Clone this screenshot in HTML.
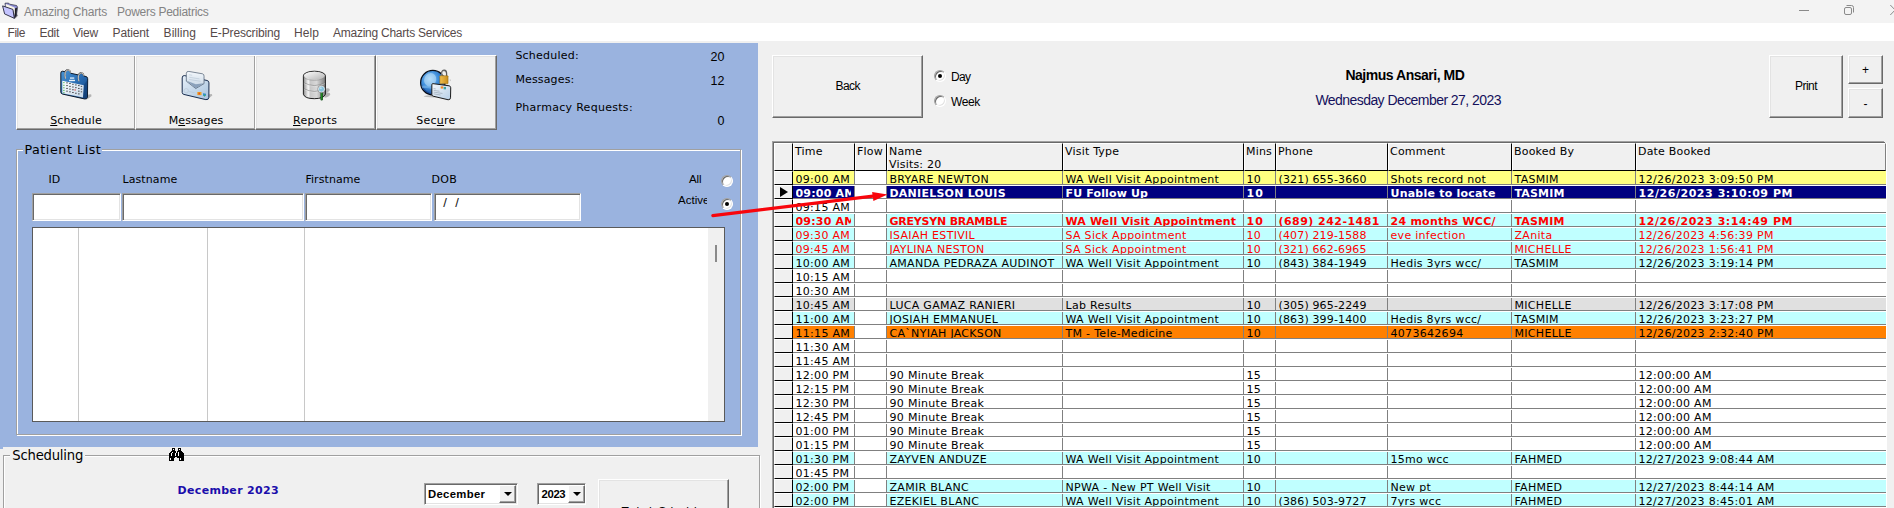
<!DOCTYPE html>
<html lang="en"><head><meta charset="utf-8"><title>Amazing Charts Powers Pediatrics</title>
<style>
html,body{margin:0;padding:0}
body{width:1894px;height:508px;overflow:hidden;position:relative;background:#f0f0f0;font-family:"DejaVu Sans","Liberation Sans",sans-serif;font-size:11px;letter-spacing:.3px;color:#000}
div,span,i,svg{position:absolute;box-sizing:border-box}
.t{white-space:nowrap;line-height:1;letter-spacing:0}
.dv{font-family:"DejaVu Sans","Liberation Sans",sans-serif}
.ls{font-family:"Liberation Sans","DejaVu Sans",sans-serif}
u{text-decoration:underline;text-underline-offset:1px}
#title{left:0;top:0;width:1894px;height:23px;background:#f3f3f3}
#menu{left:0;top:23px;width:1894px;height:18px;background:#fff}
#left{left:0;top:43px;width:758px;height:406px;background:#9ab3df}
#sched{left:3px;top:447px;width:757px;height:61px;background:#f0f0f0}
.btn{background:#f0f0f0;border:1px solid;border-color:#fff #696969 #696969 #fff;box-shadow:inset -1px -1px 0 #a0a0a0,inset 1px 1px 0 #e3e3e3}
.sunk{background:#fff;border:1px solid;border-color:#a0a0a0 #fff #fff #a0a0a0;box-shadow:inset 1px 1px 0 #696969,inset -1px -1px 0 #e3e3e3}
.grp{border:1px solid #a0a0a0;box-shadow:1px 1px 0 #fff,inset 1px 1px 0 #fff}
.radio{width:12px;height:12px;border-radius:50%;background:#fff;border:1px solid;border-color:#a0a0a0 #fff #fff #a0a0a0;box-shadow:inset 1px 1px 0 #696969,inset -1px -1px 0 #e3e3e3}
.radio.on:after{content:"";position:absolute;left:3px;top:3px;width:4px;height:4px;border-radius:50%;background:#000}
.vl{width:1px;background:#c8c8c8}
.combo{background:#fff;border:1px solid;border-color:#a0a0a0 #fff #fff #a0a0a0;box-shadow:inset 1px 1px 0 #696969,inset -1px -1px 0 #e3e3e3}
.dd{background:#f0f0f0;border:1px solid;border-color:#fff #696969 #696969 #fff;box-shadow:inset -1px -1px 0 #a0a0a0}
.dd:after{content:"";position:absolute;left:50%;top:50%;margin:-2px 0 0 -4px;border:4px solid transparent;border-top:4px solid #000;border-bottom:0}
/* grid */
#grid{left:774px;top:143px;width:1112px;height:372px;background:#fff;box-shadow:-1px -1px 0 0 #696969,-2px -2px 0 0 #a0a0a0,1px 0 0 0 #fff}
.hc{top:0;height:28px;background:#f0f0f0;border:1px solid;border-color:#fff #000 #000 #fff;overflow:hidden}
.hc.last{border-right-color:#808080}
.hc span{left:1px;top:0.5px;line-height:13px;white-space:nowrap;letter-spacing:.2px}
.row{left:0;width:1112px;height:14px}
.rh{left:0;top:0;width:19px;height:14px;background:#f0f0f0;border:1px solid;border-color:#fff #000 #000 #fff}
.c{top:0;height:14px;border-top:1px solid #fff;border-bottom:1px solid #808080;box-shadow:inset -1px 0 0 #808080;padding-left:2.5px;line-height:16px;overflow:hidden;white-space:nowrap}
.c.last{box-shadow:none}
.tc{left:2.5px;top:0;width:55px;height:12px;overflow:hidden;line-height:16px}
.c.first{border-top:0;padding-top:1px}
.c.first .tc{top:1px}
.wb,.rb{font-weight:bold;letter-spacing:.2px}
.wb{color:#fff}
.r,.rb{color:#ff0000}
.tri{left:5px;top:0.5px;width:0;height:0;border:5.5px solid transparent;border-left:8px solid #000;border-right:0}
#arrow{left:0;top:0;pointer-events:none}

</style></head>
<body>
<div id="title"></div><div id="menu"></div><div id="left"></div><div id="sched"></div>
<div style="left:0px;top:447px;width:3px;height:1px;background:#9ab3df"></div>
<svg style="left:0;top:0" width="24" height="24" viewBox="0 0 24 24">
<path d="M16.4 13.6 L18.2 15.6 L15 18.8 Z" fill="#9a9a9a"/>
<path d="M5 3.2 L8.6 3.1 L9.6 4.2 L16.6 5.5 L17.6 7.2 L16.4 15.8 L14.4 18.4 L13 9.6 L5.4 6.8 Z" fill="#8e8ed6" stroke="#2c2c3c" stroke-width=".7"/>
<path d="M5.9 3.9 L14.6 7.4 L15.3 16.6 L13 9.8 L5.8 7 Z" fill="#f6f4e8"/>
<path d="M2.6 5.9 L12.9 9.4 L14.3 18.3 L4.6 13.9 Z" fill="#c4c4ff" stroke="#26263a" stroke-width=".9" stroke-linejoin="round"/>
<path d="M15 8.6 L17 7.4 L16.3 15.8 L14.6 18.2 Z" fill="#1e1e1e"/>
</svg>
<svg style="left:1774px;top:0" width="120" height="23" viewBox="0 0 120 23" fill="none" stroke="#8a8a8a" stroke-width="1">
<path d="M25 10.5 H35"/>
<rect x="70.5" y="7.5" width="7" height="7" rx="1.5"/>
<path d="M72.5 5.5 H77.5 Q79.5 5.5 79.5 7.5 V12.5"/>
<path d="M116.3 5 L126 15 M116.3 15 L126 5"/>
</svg>
<div class="btn" style="left:16px;top:55px;width:120px;height:75px;"></div>
<div class="btn" style="left:135px;top:55px;width:121px;height:75px;"></div>
<div class="btn" style="left:255px;top:55px;width:121px;height:75px;"></div>
<div class="btn" style="left:376px;top:55px;width:121px;height:75px;"></div>
<svg style="left:50px;top:60px" width="60" height="50" viewBox="0 0 610 508"><defs><linearGradient id="cg" x1="0" y1="0" x2="1" y2="1"><stop offset="0" stop-color="#4a96d6"/><stop offset=".5" stop-color="#2a6db3"/><stop offset="1" stop-color="#134482"/></linearGradient>
<linearGradient id="cp" x1="0" y1="0" x2="1" y2="1"><stop offset="0" stop-color="#fdfeff"/><stop offset="1" stop-color="#c4d6e8"/></linearGradient></defs>
<path d="M378 352 L418 348 L422 368 L382 396 Z" fill="#9a9a9a" opacity=".7"/>
<path d="M128 114 Q110 113 110 133 L110 325 Q110 341 126 346 L352 396 Q380 400 381 378 L383 190 Q383 172 366 168 L345 163 Q335 128 312 128 Q292 132 290 152 L212 135 Q205 100 180 98 Q158 100 152 119 Z" fill="url(#cg)" stroke="#0b1626" stroke-width="10" stroke-linejoin="round"/>
<path d="M343 256 L381 200 L379 380 L352 394 L335 378 Z" fill="#103a70" opacity=".55"/>
<path d="M125 212 L343 256 L335 380 L125 339 Z" fill="url(#cp)"/>
<g fill="#3a3a3a">
<rect x="165" y="228" width="16" height="9"/><rect x="195" y="235" width="16" height="9"/><rect x="225" y="242" width="16" height="9"/><rect x="255" y="249" width="16" height="9"/><rect x="285" y="256" width="16" height="9"/><rect x="313" y="263" width="14" height="9"/>
<rect x="165" y="256" width="16" height="9"/><rect x="195" y="263" width="16" height="9"/><rect x="225" y="270" width="16" height="9"/><rect x="255" y="277" width="16" height="9"/><rect x="285" y="284" width="16" height="9"/><rect x="313" y="291" width="14" height="9"/>
<rect x="165" y="284" width="16" height="9"/><rect x="195" y="291" width="16" height="9"/><rect x="225" y="298" width="16" height="9"/><rect x="285" y="312" width="16" height="9"/><rect x="313" y="319" width="14" height="9"/>
<rect x="165" y="312" width="16" height="9"/><rect x="195" y="319" width="16" height="9"/><rect x="225" y="326" width="16" height="9"/><rect x="255" y="333" width="16" height="9"/><rect x="285" y="340" width="16" height="9"/>
</g>
<rect x="248" y="300" width="16" height="9" fill="#e03030"/>
<g fill="#3cb043"><rect x="134" y="226" width="14" height="9"/><rect x="134" y="252" width="14" height="9"/><rect x="134" y="278" width="14" height="9"/><rect x="134" y="304" width="14" height="9"/><rect x="134" y="328" width="14" height="9"/></g>
<g fill="#e8f2fb"><rect x="203" y="177" width="44" height="13"/><rect x="194" y="201" width="60" height="14"/></g>
<path d="M157 186 Q140 112 182 100 Q205 102 208 124" fill="none" stroke="#5f5a54" stroke-width="13" stroke-linecap="round"/>
<path d="M157 186 Q140 112 182 100 Q205 102 208 124" fill="none" stroke="#e9e6e0" stroke-width="8" stroke-linecap="round"/>
<path d="M293 212 Q274 146 316 130 Q340 132 342 154" fill="none" stroke="#5f5a54" stroke-width="13" stroke-linecap="round"/>
<path d="M293 212 Q274 146 316 130 Q340 132 342 154" fill="none" stroke="#e9e6e0" stroke-width="8" stroke-linecap="round"/>
</svg>
<svg style="left:170px;top:60px" width="60" height="50" viewBox="0 0 610 508"><defs><linearGradient id="mg" x1="0" y1="0" x2="1" y2="1"><stop offset="0" stop-color="#e6eff8"/><stop offset="1" stop-color="#a9c4de"/></linearGradient>
<linearGradient id="mp" x1="0" y1="0" x2="0" y2="1"><stop offset="0" stop-color="#f4f8fc"/><stop offset="1" stop-color="#c3d3e3"/></linearGradient></defs>
<path d="M385 350 L425 345 L430 362 L388 395 Z" fill="#9a9a9a" opacity=".7"/>
<path d="M145 158 Q124 158 124 182 L124 330 Q124 346 142 350 L365 403 Q394 406 395 380 L396 232 Q396 212 376 208 Z" fill="url(#mg)" stroke="#13284a" stroke-width="10" stroke-linejoin="round"/>
<path d="M166 215 L166 135 Q168 112 192 116 L330 140 Q348 146 346 165 L346 240 L262 290 Z" fill="url(#mp)" stroke="#46566b" stroke-width="7" stroke-linejoin="round"/>
<path d="M170 212 L262 288 L344 236 L262 246 Z" fill="#7f97b3" opacity=".85"/>
<g stroke="#b4c3d3" stroke-width="6"><path d="M195 150 L225 155"/><path d="M195 175 L300 192"/><path d="M195 198 L310 216"/></g>
<circle cx="165" cy="312" r="22" fill="none" stroke="#b9c6d3" stroke-width="6"/>
<path d="M190 320 L250 332" stroke="#b9c6d3" stroke-width="6"/>
<rect x="278" y="325" width="42" height="32" fill="#f0a020"/><rect x="290" y="332" width="14" height="18" fill="#e04a20"/>
<path d="M335 337 L366 343 L364 362 L350 374 L337 360 Z" fill="#2f8fc8"/><path d="M343 352 L360 356 L350 370 Z" fill="#4cb848"/>
</svg>
<svg style="left:290px;top:60px" width="60" height="50" viewBox="0 0 610 508"><defs><linearGradient id="rg" x1="0" y1="0" x2="1" y2="0"><stop offset="0" stop-color="#8c8c8c"/><stop offset=".22" stop-color="#f6f6f6"/><stop offset=".32" stop-color="#c8c8c8"/><stop offset=".6" stop-color="#d8d8d8"/><stop offset="1" stop-color="#7e7e7e"/></linearGradient>
<linearGradient id="rt" x1="0" y1="0" x2="1" y2="1"><stop offset="0" stop-color="#fcfcfc"/><stop offset="1" stop-color="#b4b4b4"/></linearGradient></defs>
<path d="M352 292 Q398 278 404 300 Q404 322 372 330 Q410 326 410 348 Q400 378 352 384 Z" fill="#a4a4a4" opacity=".8"/>
<path d="M136 160 A112 46 0 0 1 360 160 L360 348 Q345 393 247 393 Q150 393 136 348 Z" fill="url(#rg)" stroke="#1e1e1e" stroke-width="10" stroke-linejoin="round"/>
<g fill="none" stroke="#777" stroke-width="6"><path d="M141 232 Q247 288 355 232"/><path d="M141 292 Q247 348 355 292"/></g>
<g fill="none" stroke="#fff" stroke-width="4" opacity=".8"><path d="M141 239 Q247 295 355 239"/><path d="M141 299 Q247 355 355 299"/></g>
<ellipse cx="248" cy="160" rx="107" ry="40" fill="url(#rt)"/>
<path d="M140 165 A108 42 0 0 0 356 165" fill="none" stroke="#8a8a8a" stroke-width="5"/>
<path d="M322 332 L322 400" stroke="#0a4a10" stroke-width="24" stroke-linecap="round"/>
<path d="M322 337 L322 398" stroke="#239423" stroke-width="11" stroke-linecap="round"/>
<circle cx="320" cy="296" r="32" fill="#86c2dc" stroke="#f6f6f6" stroke-width="9"/>
<circle cx="320" cy="296" r="38" fill="none" stroke="#5e5e5e" stroke-width="4"/>
<ellipse cx="312" cy="286" rx="12" ry="9" fill="#c6e6f2" opacity=".8"/>
</svg>
<svg style="left:410px;top:60px" width="60" height="50" viewBox="0 0 610 508"><defs><radialGradient id="sg" cx=".38" cy=".35" r=".75"><stop offset="0" stop-color="#a9d6f7"/><stop offset=".45" stop-color="#3f8fdc"/><stop offset="1" stop-color="#123f8a"/></radialGradient>
<linearGradient id="sl" x1="0" y1="0" x2="1" y2="0"><stop offset="0" stop-color="#f0c050"/><stop offset="1" stop-color="#c98e1c"/></linearGradient>
<linearGradient id="se" x1="0" y1="0" x2="1" y2="1"><stop offset="0" stop-color="#f4f8fc"/><stop offset="1" stop-color="#b5cee6"/></linearGradient></defs>
<ellipse cx="240" cy="368" rx="100" ry="12" fill="#9a9a9a" opacity=".6"/>
<circle cx="232" cy="230" r="124" fill="url(#sg)" stroke="#070b14" stroke-width="12"/>
<path d="M122 250 Q150 330 240 345 Q170 350 128 290 Z" fill="#0f3a86" opacity=".7"/>
<ellipse cx="205" cy="200" rx="60" ry="70" fill="#bfe2fa" opacity=".55" transform="rotate(25 205 200)"/>
<path d="M118 262 Q200 250 300 300 L300 322 Q200 275 122 288 Z" fill="#8cc4f2" opacity=".5"/>
<path d="M322 165 L322 135 Q324 104 348 104 Q372 106 372 136 L372 165" fill="none" stroke="#5a5a5a" stroke-width="13"/>
<path d="M326 165 L326 137 Q328 112 348 112" fill="none" stroke="#e8e8e8" stroke-width="5"/>
<rect x="303" y="160" width="84" height="82" rx="6" fill="url(#sl)" stroke="#8a6410" stroke-width="5"/>
<path d="M400 200 L415 198 L412 215 Z" fill="#9a9a9a" opacity=".6"/>
<path d="M232 240 L398 262 Q414 266 414 282 L412 384 Q410 406 388 404 L236 368 Q222 364 222 350 L222 252 Q222 240 232 240 Z" fill="url(#se)" stroke="#151515" stroke-width="10" stroke-linejoin="round"/>
<g stroke="#7f8b99" stroke-width="5"><path d="M240 290 L262 294"/><path d="M240 308 L300 318"/><path d="M240 326 L330 340"/><path d="M240 344 L310 356"/></g>
<rect x="312" y="268" width="26" height="22" fill="#f08a24"/><rect x="342" y="274" width="24" height="24" fill="#3aa5a0"/>
</svg>
<div class="grp" style="left:16px;top:149px;width:725px;height:286px;"></div>
<div style="left:23px;top:142px;width:79px;height:14px;background:#9ab3df"></div>
<div class="radio" style="left:721px;top:175.2px;width:12px;height:12px;"></div>
<div class="radio on" style="left:721px;top:198.2px;width:12px;height:12px;"></div>
<div class="sunk" style="left:32px;top:193px;width:89px;height:28px;"></div>
<div class="sunk" style="left:122px;top:193px;width:182px;height:28px;"></div>
<div class="sunk" style="left:305px;top:193px;width:127px;height:28px;"></div>
<div class="sunk" style="left:434px;top:193px;width:147px;height:28px;"></div>
<div style="left:32px;top:227px;width:693px;height:195px;background:#fff;border:1px solid #5a5a5a"></div>
<div class="vl" style="left:78px;top:228px;width:1px;height:193px;"></div>
<div class="vl" style="left:207px;top:228px;width:1px;height:193px;"></div>
<div class="vl" style="left:304px;top:228px;width:1px;height:193px;"></div>
<div style="left:708px;top:228px;width:16px;height:193px;background:#f0f0f0"></div>
<div style="left:715px;top:245px;width:2px;height:17px;background:#8a8a8a"></div>
<div class="grp" style="left:3px;top:455px;width:757px;height:80px;"></div>
<div style="left:10px;top:448px;width:75px;height:14px;background:#f0f0f0"></div>
<div style="left:169px;top:448px;width:15px;height:13px;background:#f0f0f0"></div>
<svg style="left:169px;top:448px" width="15" height="13" viewBox="0 0 15 13" shape-rendering="crispEdges"><rect x="3" y="0" width="3" height="1" fill="#000"/><rect x="9" y="0" width="3" height="1" fill="#000"/><rect x="3" y="1" width="1" height="1" fill="#000"/><rect x="4" y="1" width="1" height="1" fill="#fff"/><rect x="5" y="1" width="1" height="1" fill="#000"/><rect x="9" y="1" width="1" height="1" fill="#000"/><rect x="10" y="1" width="1" height="1" fill="#fff"/><rect x="11" y="1" width="1" height="1" fill="#000"/><rect x="3" y="2" width="3" height="1" fill="#000"/><rect x="9" y="2" width="3" height="1" fill="#000"/><rect x="2" y="3" width="5" height="1" fill="#000"/><rect x="8" y="3" width="5" height="1" fill="#000"/><rect x="1" y="4" width="2" height="1" fill="#000"/><rect x="3" y="4" width="1" height="1" fill="#fff"/><rect x="4" y="4" width="3" height="1" fill="#000"/><rect x="8" y="4" width="1" height="1" fill="#000"/><rect x="9" y="4" width="1" height="1" fill="#fff"/><rect x="10" y="4" width="4" height="1" fill="#000"/><rect x="0" y="5" width="2" height="1" fill="#000"/><rect x="2" y="5" width="1" height="1" fill="#fff"/><rect x="3" y="5" width="3" height="1" fill="#000"/><rect x="6" y="5" width="1" height="1" fill="#fff"/><rect x="7" y="5" width="2" height="1" fill="#000"/><rect x="9" y="5" width="1" height="1" fill="#fff"/><rect x="10" y="5" width="5" height="1" fill="#000"/><rect x="0" y="6" width="2" height="1" fill="#000"/><rect x="2" y="6" width="1" height="1" fill="#fff"/><rect x="3" y="6" width="3" height="1" fill="#000"/><rect x="6" y="6" width="1" height="1" fill="#fff"/><rect x="7" y="6" width="2" height="1" fill="#000"/><rect x="9" y="6" width="1" height="1" fill="#fff"/><rect x="10" y="6" width="5" height="1" fill="#000"/><rect x="0" y="7" width="2" height="1" fill="#000"/><rect x="2" y="7" width="1" height="1" fill="#fff"/><rect x="3" y="7" width="3" height="1" fill="#000"/><rect x="6" y="7" width="1" height="1" fill="#fff"/><rect x="7" y="7" width="2" height="1" fill="#000"/><rect x="9" y="7" width="1" height="1" fill="#fff"/><rect x="10" y="7" width="5" height="1" fill="#000"/><rect x="0" y="8" width="15" height="1" fill="#000"/><rect x="0" y="9" width="6" height="1" fill="#000"/><rect x="8" y="9" width="7" height="1" fill="#000"/><rect x="0" y="10" width="1" height="1" fill="#000"/><rect x="1" y="10" width="1" height="1" fill="#fff"/><rect x="2" y="10" width="3" height="1" fill="#000"/><rect x="10" y="10" width="1" height="1" fill="#000"/><rect x="11" y="10" width="1" height="1" fill="#fff"/><rect x="12" y="10" width="3" height="1" fill="#000"/><rect x="0" y="11" width="1" height="1" fill="#000"/><rect x="1" y="11" width="1" height="1" fill="#fff"/><rect x="2" y="11" width="3" height="1" fill="#000"/><rect x="10" y="11" width="1" height="1" fill="#000"/><rect x="11" y="11" width="1" height="1" fill="#fff"/><rect x="12" y="11" width="3" height="1" fill="#000"/><rect x="0" y="12" width="5" height="1" fill="#000"/><rect x="10" y="12" width="5" height="1" fill="#000"/></svg>
<div class="combo" style="left:424px;top:483px;width:94px;height:22px;"></div>
<div class="dd" style="left:499px;top:485px;width:17px;height:18px;"></div>
<div class="combo" style="left:537px;top:483px;width:49px;height:22px;"></div>
<div class="dd" style="left:568px;top:485px;width:17px;height:18px;"></div>
<div class="btn" style="left:598px;top:479px;width:131px;height:41px;"></div>
<div class="btn" style="left:772px;top:55px;width:151px;height:63px;"></div>
<div class="radio on" style="left:934px;top:70px;width:12px;height:12px;"></div>
<div class="radio" style="left:934px;top:94.5px;width:12px;height:12px;"></div>
<div class="btn" style="left:1769px;top:55px;width:74px;height:63px;"></div>
<div class="btn" style="left:1848px;top:55px;width:35px;height:29px;"></div>
<div class="btn" style="left:1848px;top:88px;width:35px;height:30px;"></div>
<span class="t ls" style="top:6.00px;font-size:12px;letter-spacing:-0.170px;left:24px;color:#838383;">Amazing Charts</span>
<span class="t ls" style="top:6.00px;font-size:12px;letter-spacing:-0.267px;left:117px;color:#838383;">Powers Pediatrics</span>
<span class="t ls" style="top:27.00px;font-size:12px;letter-spacing:-0.486px;left:7.6px;color:#564a4a;">File</span>
<span class="t ls" style="top:27.00px;font-size:12px;letter-spacing:-0.297px;left:39.5px;color:#564a4a;">Edit</span>
<span class="t ls" style="top:27.00px;font-size:12px;letter-spacing:-0.199px;left:73px;color:#564a4a;">View</span>
<span class="t ls" style="top:27.00px;font-size:12px;letter-spacing:-0.123px;left:112.5px;color:#564a4a;">Patient</span>
<span class="t ls" style="top:27.00px;font-size:12px;letter-spacing:0.055px;left:163.6px;color:#564a4a;">Billing</span>
<span class="t ls" style="top:27.00px;font-size:12px;letter-spacing:-0.156px;left:210px;color:#564a4a;">E-Prescribing</span>
<span class="t ls" style="top:27.00px;font-size:12px;letter-spacing:0.078px;left:294px;color:#564a4a;">Help</span>
<span class="t ls" style="top:27.00px;font-size:12px;letter-spacing:-0.249px;left:333px;color:#564a4a;">Amazing Charts Services</span>
<span class="t dv" style="top:115.00px;font-size:11px;letter-spacing:0.130px;left:50.2px;"><u>S</u>chedule</span>
<span class="t dv" style="top:115.00px;font-size:11px;letter-spacing:0.081px;left:168.7px;">M<u>e</u>ssages</span>
<span class="t dv" style="top:115.00px;font-size:11px;letter-spacing:0.300px;left:293px;"><u>R</u>eports</span>
<span class="t dv" style="top:115.00px;font-size:11px;letter-spacing:0.245px;left:416.3px;">Sec<u>u</u>re</span>
<span class="t dv" style="top:50.00px;font-size:11px;letter-spacing:0.225px;left:515.4px;">Scheduled:</span>
<span class="t dv" style="top:74.00px;font-size:11px;letter-spacing:0.149px;left:515.4px;">Messages:</span>
<span class="t dv" style="top:102.00px;font-size:11px;letter-spacing:0.288px;left:515.4px;">Pharmacy Requests:</span>
<span class="t ls" style="top:51.00px;font-size:12.5px;left:710.59px;">20</span>
<span class="t ls" style="top:75.00px;font-size:12.5px;left:710.59px;">12</span>
<span class="t ls" style="top:115.00px;font-size:12.5px;left:717.55px;">0</span>
<span class="t dv" style="top:144.00px;font-size:12.7px;letter-spacing:0.551px;left:24.4px;">Patient List</span>
<span class="t dv" style="top:174.00px;font-size:11px;left:48.6px;">ID</span>
<span class="t dv" style="top:174.00px;font-size:11px;letter-spacing:0.111px;left:122.4px;">Lastname</span>
<span class="t dv" style="top:174.00px;font-size:11px;letter-spacing:0.071px;left:305.4px;">Firstname</span>
<span class="t dv" style="top:174.00px;font-size:11px;letter-spacing:0.271px;left:431.5px;">DOB</span>
<span class="t ls" style="top:174.00px;font-size:11.5px;letter-spacing:-0.094px;left:689px;">All</span>
<span class="t ls" style="top:195.00px;font-size:11.5px;letter-spacing:0.029px;left:678px;width:29.3px;overflow:hidden;">Active</span>
<span class="t ls" style="top:196.00px;font-size:13px;letter-spacing:2.385px;left:443.3px;color:#111;">/ /</span>
<span class="t dv" style="top:449.00px;font-size:13.2px;letter-spacing:-0.209px;left:12.3px;">Scheduling</span>
<span class="t dv" style="top:485.00px;font-size:11px;letter-spacing:0.312px;left:177.6px;color:#1a0dab;font-weight:bold;">December 2023</span>
<span class="t ls" style="top:489.00px;font-size:11.3px;letter-spacing:0.332px;left:428px;font-weight:bold;">December</span>
<span class="t ls" style="top:489.00px;font-size:11.3px;letter-spacing:-0.335px;left:541.5px;font-weight:bold;">2023</span>
<span class="t ls" style="top:506.00px;font-size:12px;letter-spacing:-0.855px;left:621.5px;">Today's Schedule</span>
<span class="t ls" style="top:80.00px;font-size:12px;letter-spacing:-0.597px;left:835.5px;">Back</span>
<span class="t ls" style="top:71.00px;font-size:12px;letter-spacing:-0.681px;left:951px;">Day</span>
<span class="t ls" style="top:96.00px;font-size:12px;letter-spacing:-0.367px;left:951px;">Week</span>
<span class="t ls" style="top:68.00px;font-size:14px;letter-spacing:-0.475px;left:1345.4px;font-weight:bold;">Najmus Ansari, MD</span>
<span class="t ls" style="top:93.00px;font-size:14px;letter-spacing:-0.557px;left:1315.4px;color:#15105c;">Wednesday December 27, 2023</span>
<span class="t ls" style="top:80.00px;font-size:12px;letter-spacing:-0.537px;left:1795.00px;">Print</span>
<span class="t ls" style="top:64.00px;font-size:12px;left:1861.99px;">+</span>
<span class="t ls" style="top:98.00px;font-size:12px;left:1863.50px;">-</span>
<div id="grid">
<div class="hc" style="left:0px;width:19px"></div>
<div class="hc" style="left:19px;width:62px"><span>Time</span></div>
<div class="hc" style="left:81px;width:32px"><span>Flow</span></div>
<div class="hc" style="left:113px;width:176px"><span>Name<br>Visits: 20</span></div>
<div class="hc" style="left:289px;width:181px"><span>Visit Type</span></div>
<div class="hc" style="left:470px;width:32px"><span>Mins</span></div>
<div class="hc" style="left:502px;width:112px"><span>Phone</span></div>
<div class="hc" style="left:614px;width:124px"><span>Comment</span></div>
<div class="hc" style="left:738px;width:124px"><span>Booked By</span></div>
<div class="hc last" style="left:862px;width:250px"><span>Date Booked</span></div>
<div class="row k" style="top:28px">
<div class="rh"></div>
<div class="c first" style="left:19px;width:62px;background-color:#ffff80;"><span class="tc">09:00 AM</span></div>
<div class="c first" style="left:81px;width:32px;"></div>
<div class="c first" style="left:113px;width:176px;background-color:#ffff80;">BRYARE NEWTON</div>
<div class="c first" style="left:289px;width:181px;background-color:#ffff80;">WA Well Visit Appointment</div>
<div class="c first" style="left:470px;width:32px;background-color:#ffff80;">10</div>
<div class="c first" style="left:502px;width:112px;background-color:#ffff80;letter-spacing:.15px;">(321) 655-3660</div>
<div class="c first" style="left:614px;width:124px;background-color:#ffff80;">Shots record not</div>
<div class="c first" style="left:738px;width:124px;background-color:#ffff80;">TASMIM</div>
<div class="c last first" style="left:862px;width:250px;background-color:#ffff80;">12/26/2023 3:09:50 PM</div>
</div>
<div class="row wb" style="top:42px">
<div class="rh"><i class="tri"></i></div>
<div class="c" style="left:19px;width:62px;background-color:#000080;"><span class="tc">09:00 AM</span></div>
<div class="c" style="left:81px;width:32px;"></div>
<div class="c" style="left:113px;width:176px;background-color:#000080;letter-spacing:0.24px;">DANIELSON LOUIS</div>
<div class="c" style="left:289px;width:181px;background-color:#000080;letter-spacing:0.15px;">FU Follow Up</div>
<div class="c" style="left:470px;width:32px;background-color:#000080;letter-spacing:1.19px;">10</div>
<div class="c" style="left:502px;width:112px;background-color:#000080;letter-spacing:.15px;"></div>
<div class="c" style="left:614px;width:124px;background-color:#000080;letter-spacing:0.22px;">Unable to locate</div>
<div class="c" style="left:738px;width:124px;background-color:#000080;letter-spacing:0.18px;">TASMIM</div>
<div class="c last" style="left:862px;width:250px;background-color:#000080;letter-spacing:0.55px;">12/26/2023 3:10:09 PM</div>
</div>
<div class="row k" style="top:56px">
<div class="rh"></div>
<div class="c" style="left:19px;width:62px;"><span class="tc">09:15 AM</span></div>
<div class="c" style="left:81px;width:32px;"></div>
<div class="c" style="left:113px;width:176px;"></div>
<div class="c" style="left:289px;width:181px;"></div>
<div class="c" style="left:470px;width:32px;"></div>
<div class="c" style="left:502px;width:112px;letter-spacing:.15px;"></div>
<div class="c" style="left:614px;width:124px;"></div>
<div class="c" style="left:738px;width:124px;"></div>
<div class="c last" style="left:862px;width:250px;"></div>
</div>
<div class="row rb" style="top:70px">
<div class="rh"></div>
<div class="c" style="left:19px;width:62px;background-color:#c0ffff;"><span class="tc">09:30 AM</span></div>
<div class="c" style="left:81px;width:32px;"></div>
<div class="c" style="left:113px;width:176px;background-color:#c0ffff;letter-spacing:-0.22px;">GREYSYN BRAMBLE</div>
<div class="c" style="left:289px;width:181px;background-color:#c0ffff;letter-spacing:0.16px;">WA Well Visit Appointment</div>
<div class="c" style="left:470px;width:32px;background-color:#c0ffff;letter-spacing:1.19px;">10</div>
<div class="c" style="left:502px;width:112px;background-color:#c0ffff;letter-spacing:0.46px;">(689) 242-1481</div>
<div class="c" style="left:614px;width:124px;background-color:#c0ffff;letter-spacing:0.25px;">24 months WCC/</div>
<div class="c" style="left:738px;width:124px;background-color:#c0ffff;letter-spacing:0.18px;">TASMIM</div>
<div class="c last" style="left:862px;width:250px;background-color:#c0ffff;letter-spacing:0.55px;">12/26/2023 3:14:49 PM</div>
</div>
<div class="row r" style="top:84px">
<div class="rh"></div>
<div class="c" style="left:19px;width:62px;background-color:#c0ffff;"><span class="tc">09:30 AM</span></div>
<div class="c" style="left:81px;width:32px;"></div>
<div class="c" style="left:113px;width:176px;background-color:#c0ffff;">ISAIAH ESTIVIL</div>
<div class="c" style="left:289px;width:181px;background-color:#c0ffff;">SA Sick Appointment</div>
<div class="c" style="left:470px;width:32px;background-color:#c0ffff;">10</div>
<div class="c" style="left:502px;width:112px;background-color:#c0ffff;letter-spacing:.15px;">(407) 219-1588</div>
<div class="c" style="left:614px;width:124px;background-color:#c0ffff;">eve infection</div>
<div class="c" style="left:738px;width:124px;background-color:#c0ffff;">ZAnita</div>
<div class="c last" style="left:862px;width:250px;background-color:#c0ffff;">12/26/2023 4:56:39 PM</div>
</div>
<div class="row r" style="top:98px">
<div class="rh"></div>
<div class="c" style="left:19px;width:62px;background-color:#c0ffff;"><span class="tc">09:45 AM</span></div>
<div class="c" style="left:81px;width:32px;"></div>
<div class="c" style="left:113px;width:176px;background-color:#c0ffff;">JAYLINA NESTON</div>
<div class="c" style="left:289px;width:181px;background-color:#c0ffff;">SA Sick Appointment</div>
<div class="c" style="left:470px;width:32px;background-color:#c0ffff;">10</div>
<div class="c" style="left:502px;width:112px;background-color:#c0ffff;letter-spacing:.15px;">(321) 662-6965</div>
<div class="c" style="left:614px;width:124px;background-color:#c0ffff;"></div>
<div class="c" style="left:738px;width:124px;background-color:#c0ffff;">MICHELLE</div>
<div class="c last" style="left:862px;width:250px;background-color:#c0ffff;">12/26/2023 1:56:41 PM</div>
</div>
<div class="row k" style="top:112px">
<div class="rh"></div>
<div class="c" style="left:19px;width:62px;background-color:#c0ffff;"><span class="tc">10:00 AM</span></div>
<div class="c" style="left:81px;width:32px;"></div>
<div class="c" style="left:113px;width:176px;background-color:#c0ffff;">AMANDA PEDRAZA AUDINOT</div>
<div class="c" style="left:289px;width:181px;background-color:#c0ffff;">WA Well Visit Appointment</div>
<div class="c" style="left:470px;width:32px;background-color:#c0ffff;">10</div>
<div class="c" style="left:502px;width:112px;background-color:#c0ffff;letter-spacing:.15px;">(843) 384-1949</div>
<div class="c" style="left:614px;width:124px;background-color:#c0ffff;">Hedis 3yrs wcc/</div>
<div class="c" style="left:738px;width:124px;background-color:#c0ffff;">TASMIM</div>
<div class="c last" style="left:862px;width:250px;background-color:#c0ffff;">12/26/2023 3:19:14 PM</div>
</div>
<div class="row k" style="top:126px">
<div class="rh"></div>
<div class="c" style="left:19px;width:62px;"><span class="tc">10:15 AM</span></div>
<div class="c" style="left:81px;width:32px;"></div>
<div class="c" style="left:113px;width:176px;"></div>
<div class="c" style="left:289px;width:181px;"></div>
<div class="c" style="left:470px;width:32px;"></div>
<div class="c" style="left:502px;width:112px;letter-spacing:.15px;"></div>
<div class="c" style="left:614px;width:124px;"></div>
<div class="c" style="left:738px;width:124px;"></div>
<div class="c last" style="left:862px;width:250px;"></div>
</div>
<div class="row k" style="top:140px">
<div class="rh"></div>
<div class="c" style="left:19px;width:62px;"><span class="tc">10:30 AM</span></div>
<div class="c" style="left:81px;width:32px;"></div>
<div class="c" style="left:113px;width:176px;"></div>
<div class="c" style="left:289px;width:181px;"></div>
<div class="c" style="left:470px;width:32px;"></div>
<div class="c" style="left:502px;width:112px;letter-spacing:.15px;"></div>
<div class="c" style="left:614px;width:124px;"></div>
<div class="c" style="left:738px;width:124px;"></div>
<div class="c last" style="left:862px;width:250px;"></div>
</div>
<div class="row k" style="top:154px">
<div class="rh"></div>
<div class="c" style="left:19px;width:62px;background-color:#e0e0e0;"><span class="tc">10:45 AM</span></div>
<div class="c" style="left:81px;width:32px;"></div>
<div class="c" style="left:113px;width:176px;background-color:#e0e0e0;">LUCA GAMAZ RANIERI</div>
<div class="c" style="left:289px;width:181px;background-color:#e0e0e0;">Lab Results</div>
<div class="c" style="left:470px;width:32px;background-color:#e0e0e0;">10</div>
<div class="c" style="left:502px;width:112px;background-color:#e0e0e0;letter-spacing:.15px;">(305) 965-2249</div>
<div class="c" style="left:614px;width:124px;background-color:#e0e0e0;"></div>
<div class="c" style="left:738px;width:124px;background-color:#e0e0e0;">MICHELLE</div>
<div class="c last" style="left:862px;width:250px;background-color:#e0e0e0;">12/26/2023 3:17:08 PM</div>
</div>
<div class="row k" style="top:168px">
<div class="rh"></div>
<div class="c" style="left:19px;width:62px;background-color:#c0ffff;"><span class="tc">11:00 AM</span></div>
<div class="c" style="left:81px;width:32px;"></div>
<div class="c" style="left:113px;width:176px;background-color:#c0ffff;">JOSIAH EMMANUEL</div>
<div class="c" style="left:289px;width:181px;background-color:#c0ffff;">WA Well Visit Appointment</div>
<div class="c" style="left:470px;width:32px;background-color:#c0ffff;">10</div>
<div class="c" style="left:502px;width:112px;background-color:#c0ffff;letter-spacing:.15px;">(863) 399-1400</div>
<div class="c" style="left:614px;width:124px;background-color:#c0ffff;">Hedis 8yrs wcc/</div>
<div class="c" style="left:738px;width:124px;background-color:#c0ffff;">TASMIM</div>
<div class="c last" style="left:862px;width:250px;background-color:#c0ffff;">12/26/2023 3:23:27 PM</div>
</div>
<div class="row k" style="top:182px">
<div class="rh"></div>
<div class="c" style="left:19px;width:62px;background-color:#ff8000;"><span class="tc">11:15 AM</span></div>
<div class="c" style="left:81px;width:32px;"></div>
<div class="c" style="left:113px;width:176px;background-color:#ff8000;">CA`NYIAH JACKSON</div>
<div class="c" style="left:289px;width:181px;background-color:#ff8000;">TM - Tele-Medicine</div>
<div class="c" style="left:470px;width:32px;background-color:#ff8000;">10</div>
<div class="c" style="left:502px;width:112px;background-color:#ff8000;letter-spacing:.15px;"></div>
<div class="c" style="left:614px;width:124px;background-color:#ff8000;">4073642694</div>
<div class="c" style="left:738px;width:124px;background-color:#ff8000;">MICHELLE</div>
<div class="c last" style="left:862px;width:250px;background-color:#ff8000;">12/26/2023 2:32:40 PM</div>
</div>
<div class="row k" style="top:196px">
<div class="rh"></div>
<div class="c" style="left:19px;width:62px;"><span class="tc">11:30 AM</span></div>
<div class="c" style="left:81px;width:32px;"></div>
<div class="c" style="left:113px;width:176px;"></div>
<div class="c" style="left:289px;width:181px;"></div>
<div class="c" style="left:470px;width:32px;"></div>
<div class="c" style="left:502px;width:112px;letter-spacing:.15px;"></div>
<div class="c" style="left:614px;width:124px;"></div>
<div class="c" style="left:738px;width:124px;"></div>
<div class="c last" style="left:862px;width:250px;"></div>
</div>
<div class="row k" style="top:210px">
<div class="rh"></div>
<div class="c" style="left:19px;width:62px;"><span class="tc">11:45 AM</span></div>
<div class="c" style="left:81px;width:32px;"></div>
<div class="c" style="left:113px;width:176px;"></div>
<div class="c" style="left:289px;width:181px;"></div>
<div class="c" style="left:470px;width:32px;"></div>
<div class="c" style="left:502px;width:112px;letter-spacing:.15px;"></div>
<div class="c" style="left:614px;width:124px;"></div>
<div class="c" style="left:738px;width:124px;"></div>
<div class="c last" style="left:862px;width:250px;"></div>
</div>
<div class="row k" style="top:224px">
<div class="rh"></div>
<div class="c" style="left:19px;width:62px;"><span class="tc">12:00 PM</span></div>
<div class="c" style="left:81px;width:32px;"></div>
<div class="c" style="left:113px;width:176px;">90 Minute Break</div>
<div class="c" style="left:289px;width:181px;"></div>
<div class="c" style="left:470px;width:32px;">15</div>
<div class="c" style="left:502px;width:112px;letter-spacing:.15px;"></div>
<div class="c" style="left:614px;width:124px;"></div>
<div class="c" style="left:738px;width:124px;"></div>
<div class="c last" style="left:862px;width:250px;">12:00:00 AM</div>
</div>
<div class="row k" style="top:238px">
<div class="rh"></div>
<div class="c" style="left:19px;width:62px;"><span class="tc">12:15 PM</span></div>
<div class="c" style="left:81px;width:32px;"></div>
<div class="c" style="left:113px;width:176px;">90 Minute Break</div>
<div class="c" style="left:289px;width:181px;"></div>
<div class="c" style="left:470px;width:32px;">15</div>
<div class="c" style="left:502px;width:112px;letter-spacing:.15px;"></div>
<div class="c" style="left:614px;width:124px;"></div>
<div class="c" style="left:738px;width:124px;"></div>
<div class="c last" style="left:862px;width:250px;">12:00:00 AM</div>
</div>
<div class="row k" style="top:252px">
<div class="rh"></div>
<div class="c" style="left:19px;width:62px;"><span class="tc">12:30 PM</span></div>
<div class="c" style="left:81px;width:32px;"></div>
<div class="c" style="left:113px;width:176px;">90 Minute Break</div>
<div class="c" style="left:289px;width:181px;"></div>
<div class="c" style="left:470px;width:32px;">15</div>
<div class="c" style="left:502px;width:112px;letter-spacing:.15px;"></div>
<div class="c" style="left:614px;width:124px;"></div>
<div class="c" style="left:738px;width:124px;"></div>
<div class="c last" style="left:862px;width:250px;">12:00:00 AM</div>
</div>
<div class="row k" style="top:266px">
<div class="rh"></div>
<div class="c" style="left:19px;width:62px;"><span class="tc">12:45 PM</span></div>
<div class="c" style="left:81px;width:32px;"></div>
<div class="c" style="left:113px;width:176px;">90 Minute Break</div>
<div class="c" style="left:289px;width:181px;"></div>
<div class="c" style="left:470px;width:32px;">15</div>
<div class="c" style="left:502px;width:112px;letter-spacing:.15px;"></div>
<div class="c" style="left:614px;width:124px;"></div>
<div class="c" style="left:738px;width:124px;"></div>
<div class="c last" style="left:862px;width:250px;">12:00:00 AM</div>
</div>
<div class="row k" style="top:280px">
<div class="rh"></div>
<div class="c" style="left:19px;width:62px;"><span class="tc">01:00 PM</span></div>
<div class="c" style="left:81px;width:32px;"></div>
<div class="c" style="left:113px;width:176px;">90 Minute Break</div>
<div class="c" style="left:289px;width:181px;"></div>
<div class="c" style="left:470px;width:32px;">15</div>
<div class="c" style="left:502px;width:112px;letter-spacing:.15px;"></div>
<div class="c" style="left:614px;width:124px;"></div>
<div class="c" style="left:738px;width:124px;"></div>
<div class="c last" style="left:862px;width:250px;">12:00:00 AM</div>
</div>
<div class="row k" style="top:294px">
<div class="rh"></div>
<div class="c" style="left:19px;width:62px;"><span class="tc">01:15 PM</span></div>
<div class="c" style="left:81px;width:32px;"></div>
<div class="c" style="left:113px;width:176px;">90 Minute Break</div>
<div class="c" style="left:289px;width:181px;"></div>
<div class="c" style="left:470px;width:32px;">15</div>
<div class="c" style="left:502px;width:112px;letter-spacing:.15px;"></div>
<div class="c" style="left:614px;width:124px;"></div>
<div class="c" style="left:738px;width:124px;"></div>
<div class="c last" style="left:862px;width:250px;">12:00:00 AM</div>
</div>
<div class="row k" style="top:308px">
<div class="rh"></div>
<div class="c" style="left:19px;width:62px;background-color:#c0ffff;"><span class="tc">01:30 PM</span></div>
<div class="c" style="left:81px;width:32px;"></div>
<div class="c" style="left:113px;width:176px;background-color:#c0ffff;">ZAYVEN ANDUZE</div>
<div class="c" style="left:289px;width:181px;background-color:#c0ffff;">WA Well Visit Appointment</div>
<div class="c" style="left:470px;width:32px;background-color:#c0ffff;">10</div>
<div class="c" style="left:502px;width:112px;background-color:#c0ffff;letter-spacing:.15px;"></div>
<div class="c" style="left:614px;width:124px;background-color:#c0ffff;">15mo wcc</div>
<div class="c" style="left:738px;width:124px;background-color:#c0ffff;">FAHMED</div>
<div class="c last" style="left:862px;width:250px;background-color:#c0ffff;">12/27/2023 9:08:44 AM</div>
</div>
<div class="row k" style="top:322px">
<div class="rh"></div>
<div class="c" style="left:19px;width:62px;"><span class="tc">01:45 PM</span></div>
<div class="c" style="left:81px;width:32px;"></div>
<div class="c" style="left:113px;width:176px;"></div>
<div class="c" style="left:289px;width:181px;"></div>
<div class="c" style="left:470px;width:32px;"></div>
<div class="c" style="left:502px;width:112px;letter-spacing:.15px;"></div>
<div class="c" style="left:614px;width:124px;"></div>
<div class="c" style="left:738px;width:124px;"></div>
<div class="c last" style="left:862px;width:250px;"></div>
</div>
<div class="row k" style="top:336px">
<div class="rh"></div>
<div class="c" style="left:19px;width:62px;background-color:#c0ffff;"><span class="tc">02:00 PM</span></div>
<div class="c" style="left:81px;width:32px;"></div>
<div class="c" style="left:113px;width:176px;background-color:#c0ffff;">ZAMIR BLANC</div>
<div class="c" style="left:289px;width:181px;background-color:#c0ffff;">NPWA - New PT Well Visit</div>
<div class="c" style="left:470px;width:32px;background-color:#c0ffff;">10</div>
<div class="c" style="left:502px;width:112px;background-color:#c0ffff;letter-spacing:.15px;"></div>
<div class="c" style="left:614px;width:124px;background-color:#c0ffff;">New pt</div>
<div class="c" style="left:738px;width:124px;background-color:#c0ffff;">FAHMED</div>
<div class="c last" style="left:862px;width:250px;background-color:#c0ffff;">12/27/2023 8:44:14 AM</div>
</div>
<div class="row k" style="top:350px">
<div class="rh"></div>
<div class="c" style="left:19px;width:62px;background-color:#c0ffff;"><span class="tc">02:00 PM</span></div>
<div class="c" style="left:81px;width:32px;"></div>
<div class="c" style="left:113px;width:176px;background-color:#c0ffff;">EZEKIEL BLANC</div>
<div class="c" style="left:289px;width:181px;background-color:#c0ffff;">WA Well Visit Appointment</div>
<div class="c" style="left:470px;width:32px;background-color:#c0ffff;">10</div>
<div class="c" style="left:502px;width:112px;background-color:#c0ffff;letter-spacing:.15px;">(386) 503-9727</div>
<div class="c" style="left:614px;width:124px;background-color:#c0ffff;">7yrs wcc</div>
<div class="c" style="left:738px;width:124px;background-color:#c0ffff;">FAHMED</div>
<div class="c last" style="left:862px;width:250px;background-color:#c0ffff;">12/27/2023 8:45:01 AM</div>
</div>
</div>
<svg id="arrow" width="1894" height="508" viewBox="0 0 1894 508"><path d="M712.8 215.6 L875 195.9" stroke="#f8050c" stroke-width="3.1" stroke-linecap="round" fill="none"/><path d="M887.5 194.4 L872.1 191.9 L873.4 201 Z" fill="#f8050c"/></svg>
</body></html>
